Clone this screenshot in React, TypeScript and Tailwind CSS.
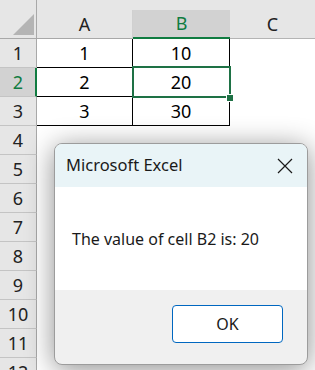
import React from "react";

const font = { fontFamily: '"Noto Sans", "Open Sans", Arial, sans-serif' };

function RowHeader({ n, selected }: { n: number; selected?: boolean }) {
  return (
    <div
      className={
        "w-[37px] shrink-0 flex items-center justify-center text-[18px] border-b border-[#c4c4c4] " +
        (selected
          ? "bg-[#d2d2d2] text-[#107c41] border-r-2 border-r-[#107c41] pl-[1px]"
          : "bg-[#e6e6e6] text-[#222] border-r border-r-[#a8a8a8]")
      }
    >
      {n}
    </div>
  );
}

export default function App() {
  const data = [
    [1, 10],
    [2, 20],
    [3, 30],
  ];
  const empty = [4, 5, 6, 7, 8, 9, 10, 11, 12];
  return (
    <div className="relative w-[315px] h-[370px] overflow-hidden bg-white" style={font}>
      {/* header row */}
      <div className="flex h-[39px]">
        <div className="relative w-[37px] shrink-0 bg-[#e6e6e6] border-r border-b border-[#a8a8a8]">
          <svg className="absolute left-0 top-0" width="37" height="39">
            <polygon points="13,35 34,14 34,35" fill="#b4b4b4" />
          </svg>
        </div>
        <div className="flex-1 flex flex-col">
          <div className="h-[11px] bg-[#e6e6e6]" />
          <div className="flex flex-1 text-[18px]">
            <div className="w-[96px] flex items-center justify-center bg-[#e6e6e6] border-b border-[#a8a8a8] border-r border-r-[#d0d0d0] text-[#222]">
              A
            </div>
            <div className="w-[97px] flex items-center justify-center bg-[#d2d2d2] border-b-2 border-[#107c41] text-[#107c41]">
              B
            </div>
            <div className="flex-1 flex items-center justify-center bg-[#e6e6e6] border-b border-[#b4b4b4] text-[#222]">
              C
            </div>
          </div>
        </div>
      </div>
      {/* data rows */}
      {data.map(([a, b], i) => (
        <div key={i} className="flex h-[29px]">
          <RowHeader n={i + 1} selected={i === 1} />
          <div className="w-[96px] flex items-center justify-center text-[18px] text-black border-r border-b border-black">
            {a}
          </div>
          <div className="w-[97px] flex items-center justify-center text-[18px] text-black border-r border-b border-black">
            {b}
          </div>
          <div className="flex-1" />
        </div>
      ))}
      {empty.map((n) => (
        <div key={n} className="flex h-[29px]">
          <RowHeader n={n} />
          <div className="flex-1" />
        </div>
      ))}

      {/* selection B2 */}
      <div className="absolute left-[132px] top-[66px] w-[99px] h-[32px] border-2 border-[#1e7145]" />
      <div className="absolute left-[226px] top-[94px] w-[6px] h-[6px] bg-[#1e7145] border border-white box-content" />

      {/* dialog */}
      <div className="absolute left-[54px] top-[143px] w-[254px] h-[222px] rounded-[8px] border border-[#9c9c9c] overflow-hidden flex flex-col bg-[#f0f0f0] shadow-[0_4px_28px_rgba(0,0,0,0.45)]">
        <div className="h-[43px] shrink-0 bg-[#e9f4f7] flex items-center justify-between pl-[11px] pr-[14px]">
          <span className="text-[16.5px] text-[#1a1a1a]">Microsoft Excel</span>
          <svg width="16" height="16" viewBox="0 0 16 16">
            <path d="M1 1 L15 15 M15 1 L1 15" stroke="#1a1a1a" strokeWidth="1.2" fill="none" />
          </svg>
        </div>
        <div className="h-[103px] shrink-0 bg-white flex items-center pl-[17px] text-[16px] text-[#1a1a1a]">
          The value of cell B2 is: 20
        </div>
        <div className="flex-1 flex items-start justify-end pt-[15px] pr-[24px]">
          <div className="w-[111px] h-[38px] rounded-[4px] border border-[#0067c0] bg-white flex items-center justify-center text-[16px] text-[#1a1a1a]">
            OK
          </div>
        </div>
      </div>
    </div>
  );
}
